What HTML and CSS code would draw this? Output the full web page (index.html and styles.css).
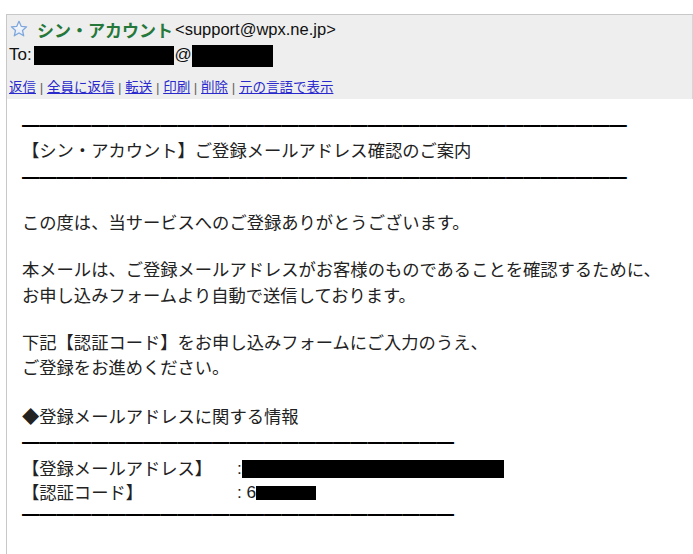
FILE: index.html
```html
<!DOCTYPE html>
<html lang="ja">
<head>
<meta charset="utf-8">
<title>シン・アカウント</title>
<link rel="stylesheet" href="styles.css">
</head>
<body>
<div class="mail">
  <div class="head">
    <div class="from">
      <svg class="star" width="18" height="18" viewBox="0 0 18 18" aria-hidden="true">
        <defs>
          <linearGradient id="sg" x1="0" y1="0" x2="0" y2="1">
            <stop offset="0" stop-color="#ffffff"/>
            <stop offset="1" stop-color="#dfe9f7"/>
          </linearGradient>
        </defs>
        <path d="M9 1.3 L11.2 6.3 L16.6 6.8 L12.5 10.4 L13.7 15.8 L9 13 L4.3 15.8 L5.5 10.4 L1.4 6.8 L6.8 6.3 Z" fill="url(#sg)" stroke="#7fa7dc" stroke-width="1.3" stroke-linejoin="round"/>
      </svg>
      <span class="name">シン・アカウント</span><span class="addr">&lt;support@wpx.ne.jp&gt;</span>
    </div>
    <div class="to">To: <span class="redact r-to1"></span>@<span class="redact r-to2"></span></div>
    <div class="links">
      <a href="#">返信</a><span class="sep">|</span><a href="#">全員に返信</a><span class="sep">|</span><a href="#">転送</a><span class="sep">|</span><a href="#">印刷</a><span class="sep">|</span><a href="#">削除</a><span class="sep">|</span><a href="#">元の言語で表示</a>
    </div>
  </div>
  <div class="content">
    <div class="block">
      <div class="rule">━━━━━━━━━━━━━━━━━━━━━━━━━━━━━━━━━━━</div>
      <div class="title">【シン・アカウント】ご登録メールアドレス確認のご案内</div>
      <div class="rule">━━━━━━━━━━━━━━━━━━━━━━━━━━━━━━━━━━━</div>
    </div>
    <p>この度は、当サービスへのご登録ありがとうございます。</p>
    <p>本メールは、ご登録メールアドレスがお客様のものであることを確認するために、<br>お申し込みフォームより自動で送信しております。</p>
    <p>下記【認証コード】をお申し込みフォームにご入力のうえ、<br>ご登録をお進めください。</p>
    <div class="block info">
      <div>◆登録メールアドレスに関する情報</div>
      <div class="rule rule-info">━━━━━━━━━━━━━━━━━━━━━━━━━</div>
      <div class="rows">
        <div class="label">【登録メールアドレス】</div>
        <div class="value">:<span class="redact r-mail"></span></div>
        <div class="label">【認証コード】</div>
        <div class="value">: 6<span class="redact r-code"></span></div>
      </div>
      <div class="rule rule-end">━━━━━━━━━━━━━━━━━━━━━━━━━</div>
    </div>
  </div>
</div>
</body>
</html>
```
FILE: styles.css
```css
html, body {
  margin: 0;
  padding: 0;
  background: #ffffff;
}

body {
  height: 554px;
  overflow: hidden;
}

.mail {
  margin: 14px 0 0 6px;
  border-top: 1px solid #c8c8c8;
  border-left: 1px solid #c8c8c8;
  min-height: 540px;
}

.head {
  background: #eeeeee;
  border-right: 1px solid #d6d6d6;
  padding: 2px 0 3px 2px;
  height: 79px;
}

.from {
  display: flex;
  align-items: center;
  height: 24px;
  white-space: nowrap;
}

.star {
  margin: 0 9px 0 1px;
  flex: none;
}

.name {
  font-family: "Noto Sans CJK JP", sans-serif;
  font-weight: 700;
  font-size: 17px;
  color: #25783a;
}

.addr {
  font-family: "Liberation Sans", Arial, sans-serif;
  font-size: 16.5px;
  color: #111;
  margin-left: 2px;
}

.to {
  font-family: "Liberation Sans", Arial, sans-serif;
  font-size: 17px;
  color: #111;
  height: 24px;
  line-height: 24px;
  margin-top: 2px;
  white-space: nowrap;
}

.redact {
  display: inline-block;
  background: #000;
  vertical-align: middle;
}

.r-to1 { width: 140px; height: 19px; margin-left: -2px; }
.r-to2 { width: 81px; height: 22px; }

.links {
  font-family: "Noto Sans CJK JP", sans-serif;
  font-size: 13.5px;
  line-height: 18px;
  margin-top: 10px;
  white-space: nowrap;
}

.links a {
  color: #2a2acc;
  text-decoration: underline;
}

.sep {
  color: #666;
  font-family: "Liberation Sans", Arial, sans-serif;
  margin: 0 3.7px;
}

.content {
  padding: 11px 0 0 15px;
  font-family: "Noto Sans CJK JP", sans-serif;
  font-size: 17.3px;
  line-height: 25.5px;
  color: #222;
}

.content p {
  margin: 21.5px 0 0 0;
}

.rule {
  color: #000;
  white-space: nowrap;
  line-height: 19.5px;
  padding-top: 6px;
}

.rule-info {
  padding-top: 5px;
  padding-bottom: 1px;
}

.title {
  margin: 1px 0 0 0;
}

.info {
  margin-top: 23px;
}

.rows {
  display: grid;
  grid-template-columns: 215px auto;
  line-height: 24px;
  margin: 2px 0 0 0;
}

.rule-end {
  padding-top: 1px;
}

.value {
  font-family: "Liberation Sans", "Noto Sans CJK JP", sans-serif;
  white-space: nowrap;
}

.r-mail { width: 262px; height: 18px; }
.r-code { width: 60px; height: 14px; }
```
